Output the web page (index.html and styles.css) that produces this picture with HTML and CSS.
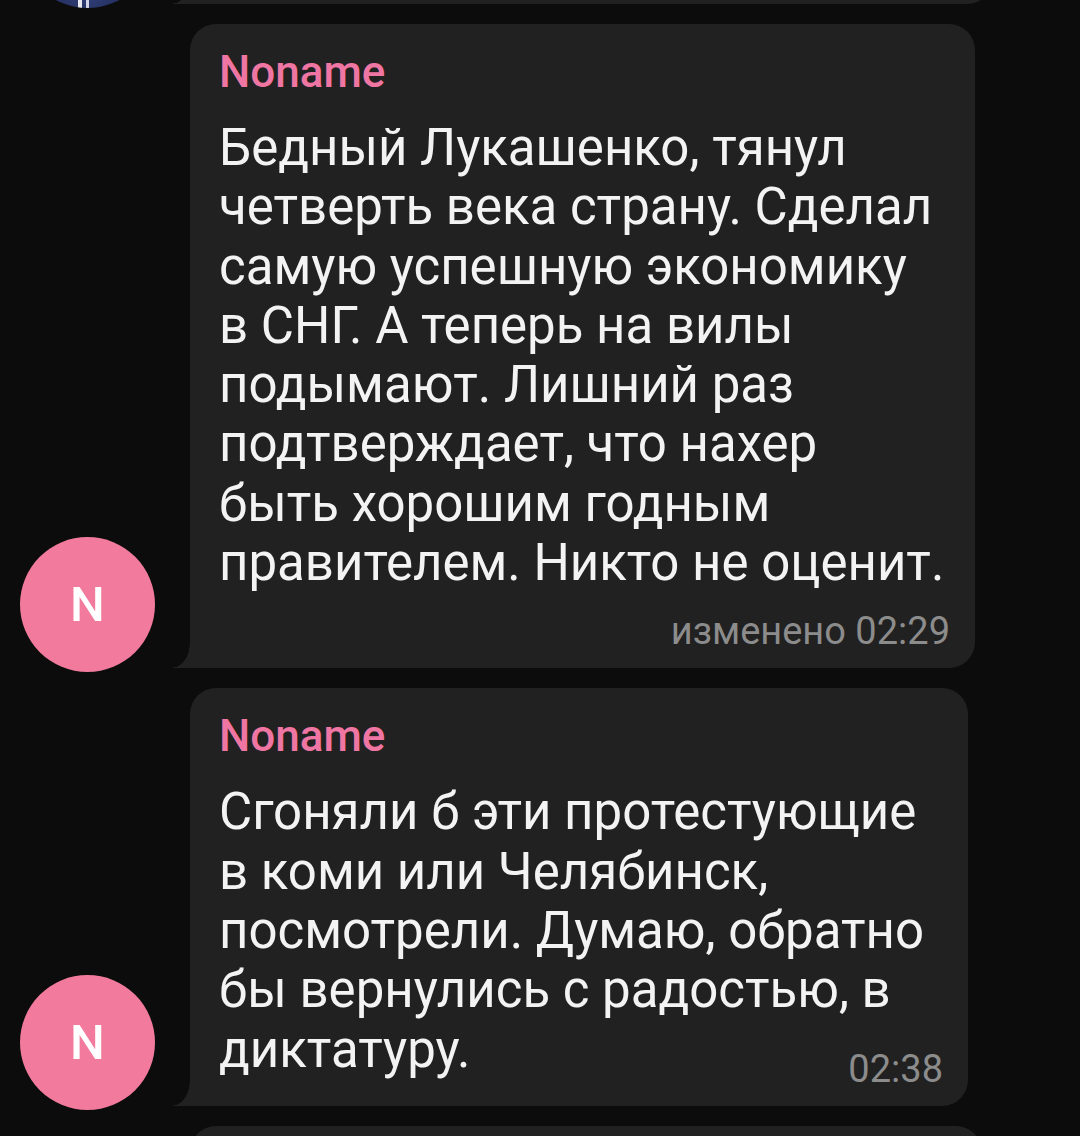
FILE: index.html
```html
<!DOCTYPE html>
<html lang="ru">
<head>
    <meta charset="UTF-8">
    <meta name="viewport" content="width=device-width, initial-scale=1.0">
    <title>Чат</title>
    <link rel="stylesheet" href="styles.css">
</head>
<body>
    <div class="chat">
        <!-- предыдущее сообщение, видно только низ -->
        <div class="msg">
            <div class="avatar avatar-photo"></div>
            <div class="bubble bubble-prev"></div>
        </div>

        <div class="msg">
            <div class="avatar">N</div>
            <div class="bubble bubble-first">
                <div class="name">Noname</div>
                <div class="text">
                    Бедный Лукашенко, тянул<br>
                    четверть века страну. Сделал<br>
                    самую успешную экономику<br>
                    в СНГ. А теперь на вилы<br>
                    подымают. Лишний раз<br>
                    подтверждает, что нахер<br>
                    быть хорошим годным<br>
                    правителем. Никто не оценит.
                </div>
                <div class="time">изменено 02:29</div>
            </div>
        </div>

        <div class="msg">
            <div class="avatar">N</div>
            <div class="bubble bubble-second">
                <div class="name">Noname</div>
                <div class="text">
                    Сгоняли б эти протестующие<br>
                    в коми или Челябинск,<br>
                    посмотрели. Думаю, обратно<br>
                    бы вернулись с радостью, в<br>
                    диктатуру.
                </div>
                <div class="time time-inline">02:38</div>
            </div>
        </div>

        <div class="msg">
            <div class="avatar avatar-empty"></div>
            <div class="bubble bubble-next"></div>
        </div>
    </div>
</body>
</html>
```

FILE: styles.css
```css
body {
    margin: 0;
    background-color: #0c0c0c;
    font-family: Roboto, "Noto Sans", sans-serif;
    overflow: hidden;
}
.chat {
    display: flex;
    flex-direction: column;
    gap: 20px;
    margin-top: -196px;
    padding-left: 20px;
}
.msg {
    display: flex;
    align-items: flex-end;
    gap: 35px;
}
.avatar {
    width: 135px;
    height: 135px;
    border-radius: 50%;
    flex-shrink: 0;
    margin-bottom: -4px;
    background-color: #f27b9d;
    color: #fff;
    font-size: 49px;
    font-weight: 500;
    display: flex;
    align-items: center;
    justify-content: center;
}
.avatar-photo {
    background:
        linear-gradient(#e8e8f0, #e8e8f0) 58px 124px / 4px 11px no-repeat,
        linear-gradient(#d0d4e6, #d0d4e6) 66px 126px / 3px 9px no-repeat,
        radial-gradient(circle at 50% 85%, #33427a 0%, #1d2652 40%, #141a3a 100%);
}
.avatar-empty {
    visibility: hidden;
}
.bubble {
    position: relative;
    box-sizing: border-box;
    background-color: #212121;
    border-radius: 26px 26px 26px 0;
    padding: 26px 25px 15px 29px;
}
.bubble::before {
    content: '';
    position: absolute;
    left: -18px;
    bottom: 0;
    width: 18px;
    height: 25px;
    background: radial-gradient(ellipse 18px 25px at 0 0, transparent 97%, #212121 100%);
}
.bubble-prev {
    width: 803px;
    height: 200px;
}
.bubble-first {
    width: 785px;
}
.bubble-second {
    width: 778px;
}
.bubble-next {
    width: 792px;
    height: 240px;
    border-radius: 26px;
}
.bubble-next::before {
    display: none;
}
.name {
    color: #ef76a2;
    font-size: 44px;
    font-weight: 500;
    line-height: 44px;
    margin-bottom: 24px;
}
.text {
    color: #f3f3f3;
    font-size: 51px;
    line-height: 59.3px;
}
.time {
    color: #8c8c8c;
    font-size: 38px;
    line-height: 44px;
    text-align: right;
    margin-top: 17px;
}
.time-inline {
    margin-top: -32px;
}
```
